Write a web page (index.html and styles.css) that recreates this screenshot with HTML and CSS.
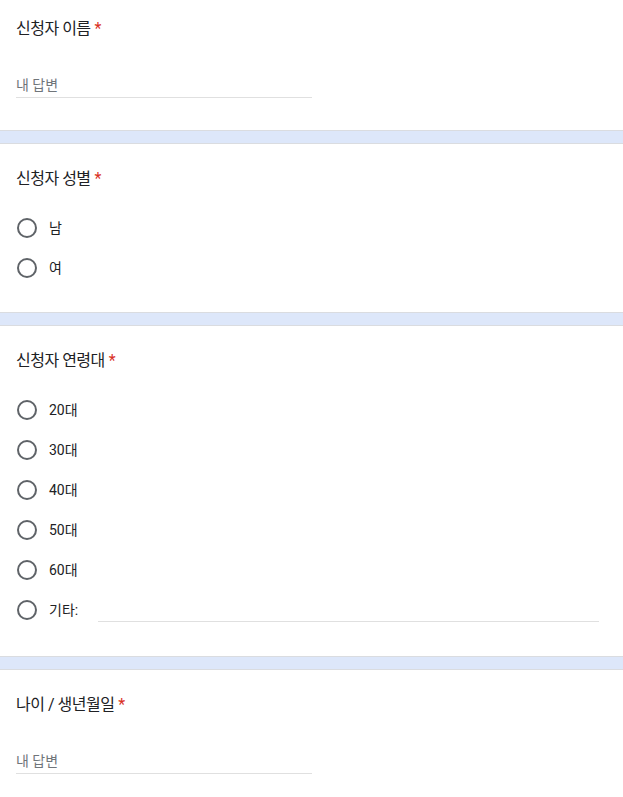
FILE: index.html
```html
<!DOCTYPE html>
<html lang="ko">
<head>
<meta charset="utf-8">
<link rel="stylesheet" href="styles.css">
</head>
<body>
<div class="form">
  <section class="card card-first">
    <div class="title">신청자 이름<span class="req">*</span></div>
    <div class="text-input"><span class="ph">내 답변</span></div>
  </section>
  <div class="band"></div>
  <section class="card">
    <div class="title">신청자 성별<span class="req">*</span></div>
    <div class="options">
      <div class="opt"><span class="radio"></span><span class="lbl">남</span></div>
      <div class="opt"><span class="radio"></span><span class="lbl">여</span></div>
    </div>
  </section>
  <div class="band"></div>
  <section class="card card-tall">
    <div class="title">신청자 연령대<span class="req">*</span></div>
    <div class="options">
      <div class="opt"><span class="radio"></span><span class="lbl">20대</span></div>
      <div class="opt"><span class="radio"></span><span class="lbl">30대</span></div>
      <div class="opt"><span class="radio"></span><span class="lbl">40대</span></div>
      <div class="opt"><span class="radio"></span><span class="lbl">50대</span></div>
      <div class="opt"><span class="radio"></span><span class="lbl">60대</span></div>
      <div class="opt"><span class="radio"></span><span class="lbl">기타:</span><span class="other-line"></span></div>
    </div>
  </section>
  <div class="band"></div>
  <section class="card">
    <div class="title">나이 / 생년월일<span class="req">*</span></div>
    <div class="text-input"><span class="ph">내 답변</span></div>
  </section>
</div>
</body>
</html>
```
FILE: styles.css
```css
html, body {
  margin: 0;
  padding: 0;
  background: #fff;
}
body {
  font-family: Roboto, "Noto Sans CJK KR", sans-serif;
  color: #202124;
  overflow: hidden;
}
.form {
  display: flex;
  flex-direction: column;
}
.card {
  background: #fff;
  padding: 23px 16px 24px 16px;
}
.card-first {
  padding-top: 17px;
}
.card-tall {
  padding-bottom: 26px;
}
.title {
  font-size: 16px;
  line-height: 24px;
  height: 24px;
  letter-spacing: -0.5px;
}
.req {
  color: #d93025;
  margin-left: 4px;
  letter-spacing: 0;
}
.text-input {
  margin-top: 31px;
  width: 296px;
  height: 25px;
  border-bottom: 1px solid #e0e0e0;
  margin-bottom: 8px;
  display: flex;
  align-items: center;
}
.ph {
  font-size: 14px;
  color: #70757a;
  line-height: 20px;
}
.band {
  height: 12px;
  background: #dde7fa;
  border-top: 1px solid #dadce0;
  border-bottom: 1px solid #dadce0;
}
.options {
  margin-top: 17px;
  display: flex;
  flex-direction: column;
}
.opt {
  height: 40px;
  display: flex;
  align-items: center;
}
.radio {
  width: 16px;
  height: 16px;
  border: 2px solid #5f6368;
  border-radius: 50%;
  margin-left: 1px;
  flex: none;
}
.lbl {
  font-size: 14px;
  line-height: 20px;
  margin-left: 12px;
}
.other-line {
  flex: 1;
  margin-left: 20px;
  margin-right: 8px;
  height: 22px;
  align-self: center;
  margin-top: 1px;
  border-bottom: 1px solid #e0e0e0;
}
```
